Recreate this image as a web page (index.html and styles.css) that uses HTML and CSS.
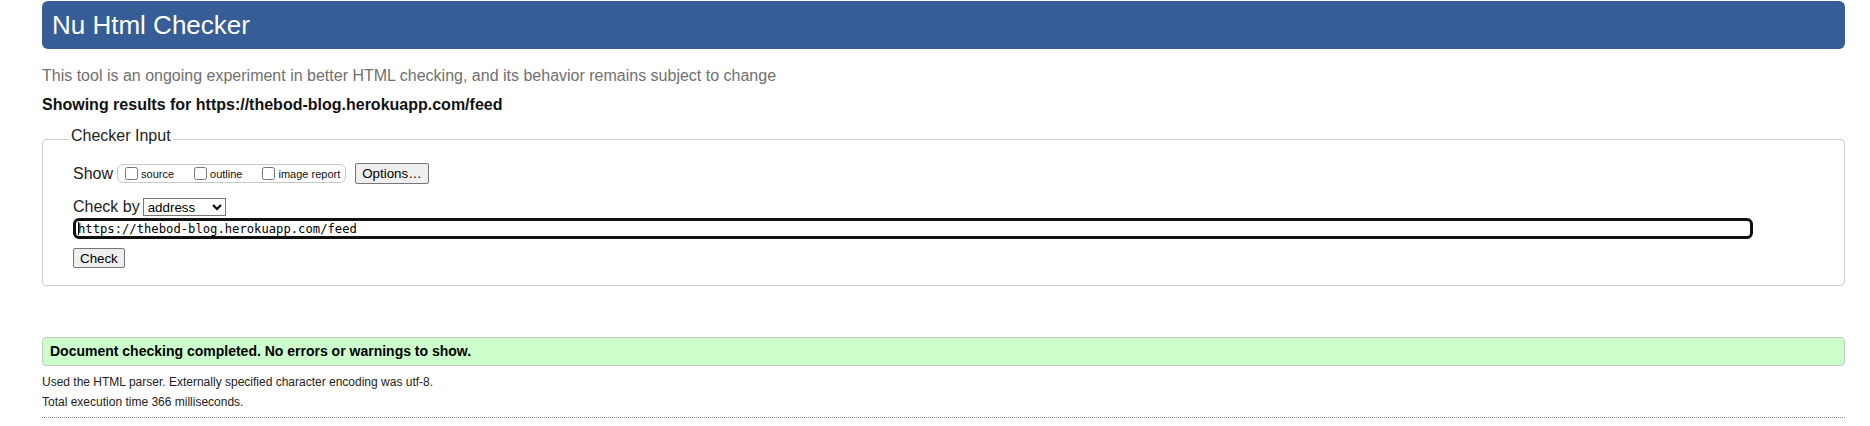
FILE: index.html
```html
<!DOCTYPE html>
<html lang="en">
<head>
<meta charset="utf-8">
<title>Showing results for https://thebod-blog.herokuapp.com/feed - Nu Html Checker</title>
<link rel="stylesheet" href="styles.css">
</head>
<body>
<h1 class="title">Nu Html Checker</h1>
<p class="intro">This tool is an ongoing experiment in better HTML checking, and its behavior remains subject to change</p>
<p class="showing">Showing results for https://thebod-blog.herokuapp.com/feed</p>
<form class="checker">
  <fieldset class="input-box">
    <legend class="legend">Checker Input</legend>
    <div class="row show-row">
      <span class="row-label">Show</span>
      <span class="show-group">
        <label class="opt"><input type="checkbox" class="cb"><span>source</span></label>
        <label class="opt"><input type="checkbox" class="cb"><span>outline</span></label>
        <label class="opt opt-last"><input type="checkbox" class="cb"><span>image report</span></label>
      </span>
      <button type="button" class="btn btn-options">Options…</button>
    </div>
    <div class="row by-row">
      <span class="row-label">Check by</span>
      <select class="by-select"><option>address</option></select>
    </div>
    <div class="url-wrap"><input class="url" type="url" value="https://thebod-blog.herokuapp.com/feed"><span class="caret"></span></div>
    <div class="submit-row"><button class="btn" type="button">Check</button></div>
  </fieldset>
</form>
<p class="success">Document checking completed. No errors or warnings to show.</p>
<p class="details details-first">Used the HTML parser. Externally specified character encoding was utf-8.</p>
<p class="details">Total execution time 366 milliseconds.</p>
<hr class="sep">
</body>
</html>
```

FILE: styles.css
```css
html { background: #fff; }
body {
  margin: 1px 25px 0 42px;
  font-family: "Liberation Sans", Arial, sans-serif;
  color: #000;
}
.title {
  margin: 0;
  height: 48px;
  line-height: 48px;
  padding: 0 10px;
  background: #365d95;
  color: #fff;
  font-size: 26px;
  font-weight: normal;
  border-radius: 6px;
}
.intro {
  margin: 17px 0 0;
  font-size: 16px;
  line-height: 20px;
  color: #707070;
}
.showing {
  margin: 9px 0 0;
  font-size: 16px;
  line-height: 20px;
  font-weight: bold;
  color: #111;
}
.checker { margin: 11px 0 0; }
.input-box {
  margin: 0;
  border: 1px solid #ccc;
  border-radius: 4px;
  padding: 10px 28px 17px 30px;
}
.legend {
  font-size: 16px;
  line-height: 20px;
  padding: 0 2px 7px;
  margin-left: -4px;
  color: #222;
}
.row {
  display: flex;
  align-items: center;
  font-size: 16px;
  color: #222;
}
.show-row { height: 21px; }
.show-group {
  display: flex;
  align-items: center;
  height: 17px;
  margin: 0 9px 0 4px;
  padding: 0 5px 0 3px;
  border: 1px solid #c8c8c8;
  border-radius: 6px;
}
.opt {
  display: flex;
  align-items: center;
  font-size: 11px;
  margin-right: 16px;
  color: #111;
}
.opt-last { margin-right: 0; }
.cb {
  width: 13px;
  height: 13px;
  margin: 0 3px 0 4px;
}
.btn {
  height: 20px;
  padding: 0 6px;
  font-family: "Liberation Sans", Arial, sans-serif;
  font-size: 13.33px;
  color: #000;
  background: #efefef;
  border: 1px solid #767676;
  border-radius: 2px;
}
.btn-options { height: 21px; padding: 0 6px; }
.by-row { margin-top: 14px; height: 18px; }
.by-select {
  width: 83px;
  height: 18px;
  margin-left: 3px;
  font-family: "Liberation Sans", Arial, sans-serif;
  font-size: 13.33px;
  color: #000;
  background: #fff;
  border: 1px solid #767676;
  border-radius: 0;
}
.url-wrap {
  position: relative;
  margin-top: 2px;
  height: 21px;
}
.url {
  box-sizing: border-box;
  width: 1680px;
  height: 21px;
  padding: 0 0 0 2px;
  border: 3px solid #111;
  border-radius: 6px;
  font-family: "DejaVu Sans Mono", monospace;
  font-size: 12.2px;
  color: #000;
  outline: none;
}
.caret {
  position: absolute;
  left: 5px;
  top: 4px;
  width: 1px;
  height: 13px;
  background: #000;
}
.submit-row { margin-top: 9px; }
.success {
  box-sizing: border-box;
  margin: 51px 0 0;
  height: 29px;
  padding: 0 7px;
  line-height: 27px;
  background: #ccffcc;
  border: 1px solid #c4c4c4;
  border-radius: 4px;
  font-size: 14px;
  font-weight: bold;
  color: #000;
}
.details {
  margin: 0;
  font-size: 12px;
  line-height: 20px;
  color: #222;
}
.details-first { margin-top: 6px; }
.sep {
  margin: 5px 0 0;
  height: 0;
  border: 0;
  border-top: 1px dotted #888;
}
```
